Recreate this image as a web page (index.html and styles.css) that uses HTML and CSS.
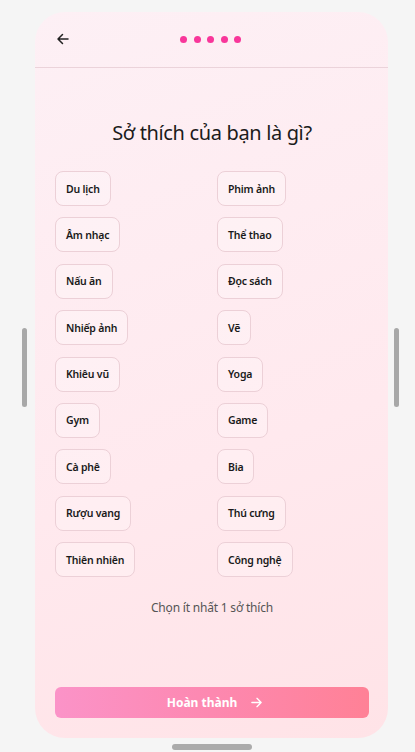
FILE: index.html
```html
<!DOCTYPE html>
<html lang="vi">
<head>
<meta charset="utf-8">
<link rel="stylesheet" href="styles.css">
</head>
<body>
<div class="side side-left"></div>
<div class="side side-right"></div>
<div class="phone">
  <header class="header">
    <button class="back" aria-label="Quay lại">
      <svg width="14" height="14" viewBox="0 0 14 14" fill="none" stroke="#222" stroke-width="1.5" stroke-linecap="round" stroke-linejoin="round"><path d="M12 7H2.5M6.5 2.5L2 7l4.5 4.5"/></svg>
    </button>
    <div class="dots"><span></span><span></span><span></span><span></span><span></span></div>
  </header>
  <main class="content">
    <h1 class="title">Sở thích của bạn là gì?</h1>
    <div class="grid">
      <div class="cell"><button class="chip">Du lịch</button></div>
      <div class="cell"><button class="chip">Phim ảnh</button></div>
      <div class="cell"><button class="chip">Âm nhạc</button></div>
      <div class="cell"><button class="chip">Thể thao</button></div>
      <div class="cell"><button class="chip">Nấu ăn</button></div>
      <div class="cell"><button class="chip">Đọc sách</button></div>
      <div class="cell"><button class="chip">Nhiếp ảnh</button></div>
      <div class="cell"><button class="chip">Vẽ</button></div>
      <div class="cell"><button class="chip">Khiêu vũ</button></div>
      <div class="cell"><button class="chip">Yoga</button></div>
      <div class="cell"><button class="chip">Gym</button></div>
      <div class="cell"><button class="chip">Game</button></div>
      <div class="cell"><button class="chip">Cà phê</button></div>
      <div class="cell"><button class="chip">Bia</button></div>
      <div class="cell"><button class="chip">Rượu vang</button></div>
      <div class="cell"><button class="chip">Thú cưng</button></div>
      <div class="cell"><button class="chip">Thiên nhiên</button></div>
      <div class="cell"><button class="chip">Công nghệ</button></div>
    </div>
    <p class="hint">Chọn ít nhất 1 sở thích</p>
    <button class="finish">Hoàn thành
      <svg width="13" height="13" viewBox="0 0 14 14" fill="none" stroke="#fff" stroke-width="1.4" stroke-linecap="round" stroke-linejoin="round"><path d="M2 7h10M7.5 2.5L12 7l-4.5 4.5"/></svg>
    </button>
  </main>
</div>
<div class="home-bar"></div>
</body>
</html>
```
FILE: styles.css
```css
* { box-sizing: border-box; }
html, body { margin: 0; padding: 0; }
body {
  background: #f5f5f5;
  width: 415px;
  height: 752px;
  position: relative;
  overflow: hidden;
  font-family: "Noto Sans", "Open Sans", sans-serif;
  color: #1a1a1a;
}
.phone {
  margin: 12px 0 0 35px;
  width: 353px;
  height: 726px;
  border-radius: 30px;
  background: linear-gradient(160deg, #fdf0f5 0%, #ffe9ee 60%, #ffe3e7 100%);
  display: flex;
  flex-direction: column;
  overflow: hidden;
}
.header {
  height: 56px;
  flex: none;
  border-bottom: 1px solid #ebd3da;
  display: flex;
  align-items: center;
  padding: 0 0 0 21px;
  position: relative;
}
.back {
  border: 0;
  background: none;
  padding: 0;
  width: 14px;
  height: 14px;
  display: flex;
  margin-top: -2px;
}
.dots {
  position: absolute;
  left: 145px;
  top: 24px;
  display: flex;
  gap: 6.5px;
}
.dots span {
  width: 7px;
  height: 7px;
  border-radius: 50%;
  background: #f8369a;
}
.content {
  flex: 1;
  display: flex;
  flex-direction: column;
  padding: 0 19px 20px 20px;
}
.title {
  margin: 51px 0 0;
  font-size: 20px;
  line-height: 28px;
  font-weight: 400;
  text-align: center;
  color: #1b1b1b;
  letter-spacing: -0.35px;
}
.grid {
  margin-top: 24px;
  display: grid;
  grid-template-columns: 1fr 1fr;
  column-gap: 10px;
  row-gap: 11.4px;
}
.cell { display: flex; }
.chip {
  height: 35px;
  padding: 0 10px;
  border: 1px solid #ecd0d7;
  border-radius: 8px;
  background: rgba(255,255,255,0.25);
  font-family: inherit;
  font-size: 10.5px;
  font-weight: 600;
  color: #1a1a1a;
  letter-spacing: -0.2px;
}
.hint {
  margin: 22px 0 0;
  font-size: 12px;
  line-height: 18px;
  text-align: center;
  color: #555;
  letter-spacing: -0.2px;
}
.finish {
  margin-top: auto;
  height: 31px;
  border: 0;
  border-radius: 6px;
  background: linear-gradient(90deg, #fb93c8 0%, #fd88b0 50%, #ff8196 100%);
  color: #fff;
  font-family: inherit;
  font-size: 12px;
  font-weight: 700;
  display: flex;
  align-items: center;
  justify-content: center;
  gap: 13px;
  padding: 0 0 0 6px;
}
.side {
  position: absolute;
  width: 5px;
  height: 79px;
  top: 328px;
  border-radius: 3px;
  background: #a8a8a8;
}
.side-left { left: 22px; }
.side-right { left: 394px; }
.home-bar {
  position: absolute;
  left: 172px;
  top: 744px;
  width: 80px;
  height: 6px;
  border-radius: 3px;
  background: #ababab;
}
```
